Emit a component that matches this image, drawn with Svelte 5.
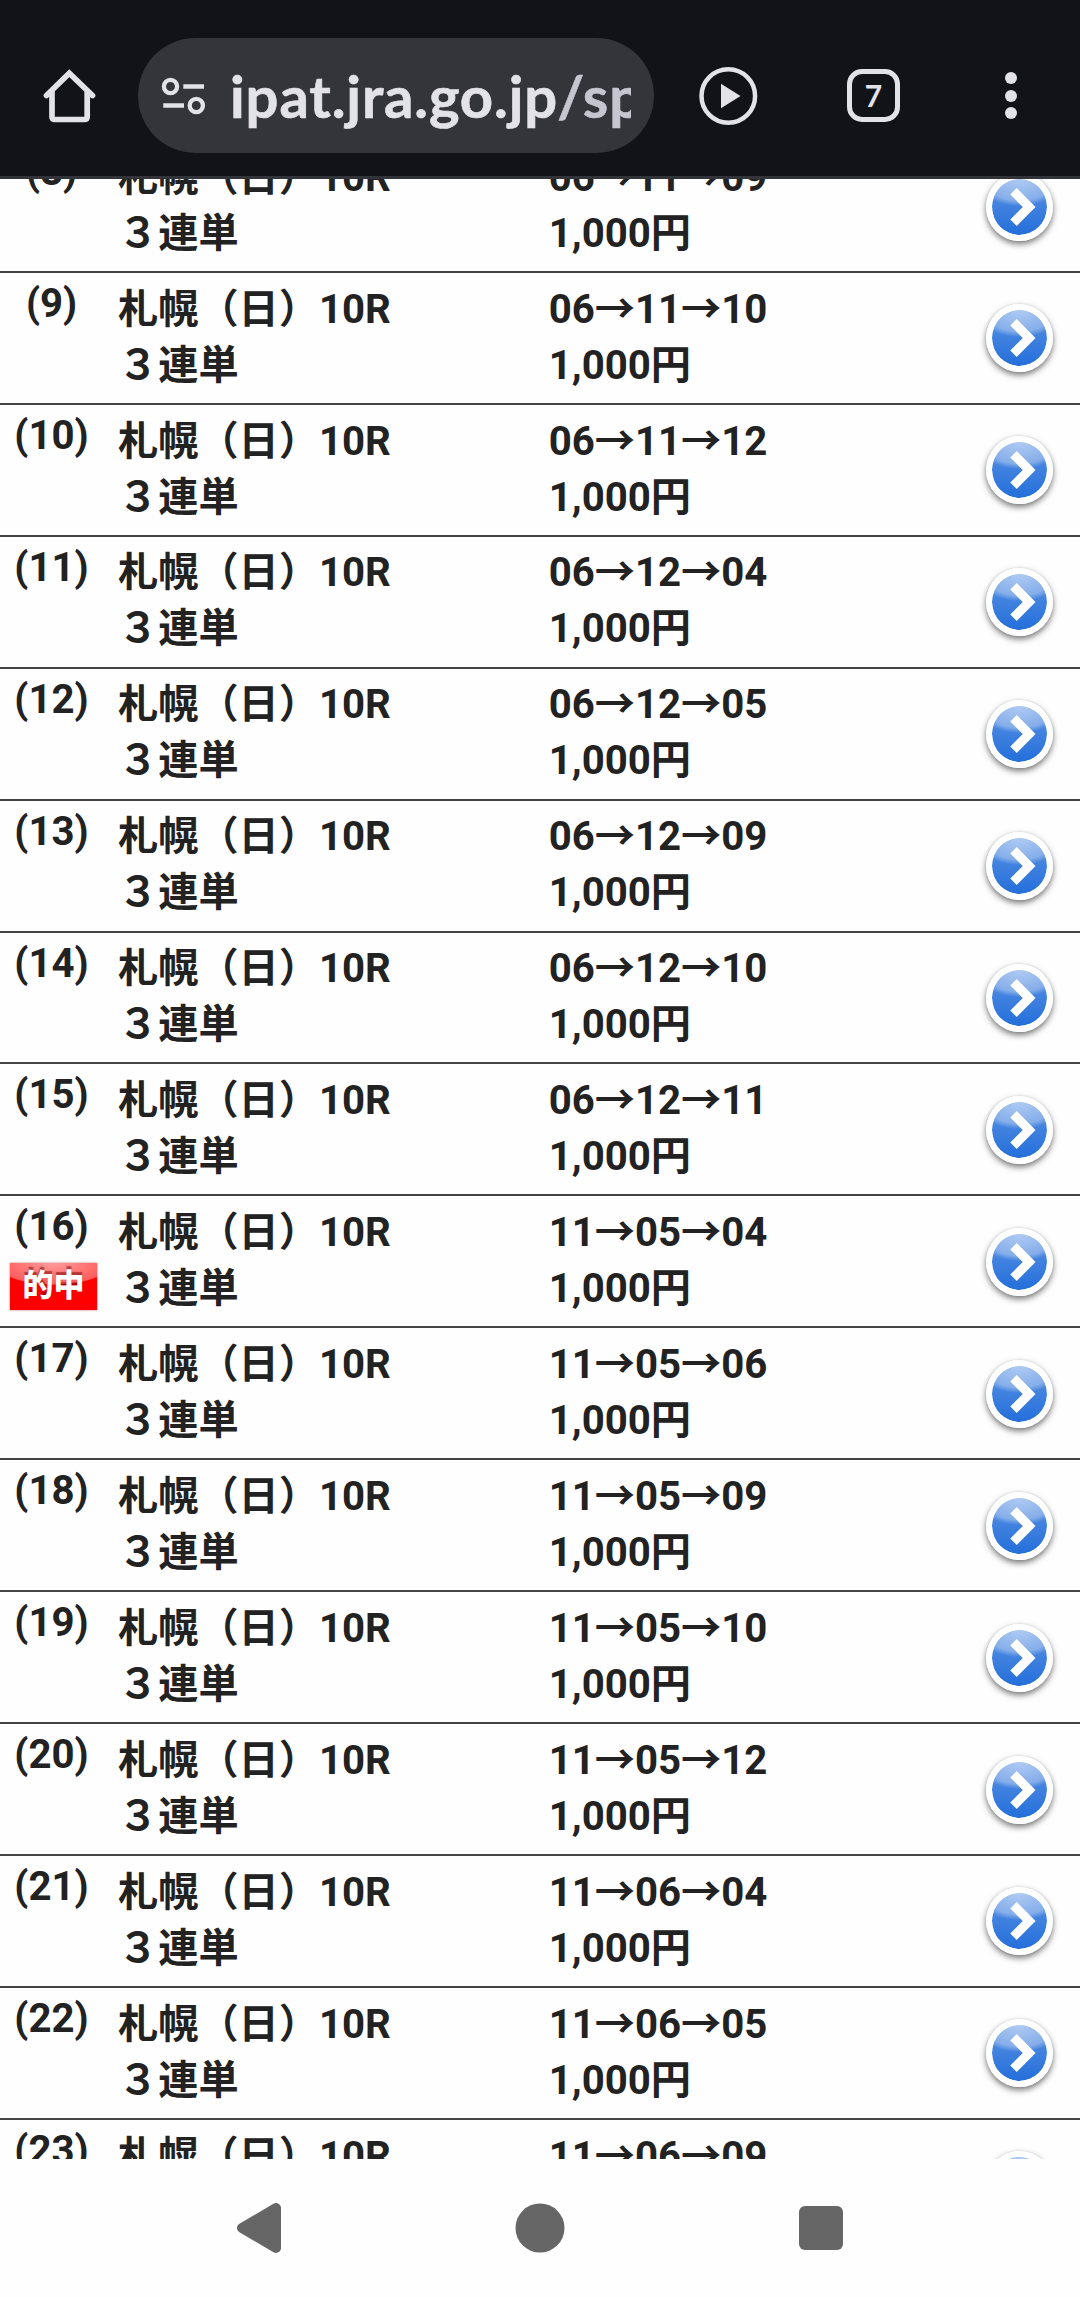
<script lang="ts">
	type Bet = { no: number; combo: string; hit?: boolean };

	const combos = [
		'06→11→09', '06→11→10', '06→11→12', '06→12→04', '06→12→05', '06→12→09',
		'06→12→10', '06→12→11', '11→05→04', '11→05→06', '11→05→09', '11→05→10',
		'11→05→12', '11→06→04', '11→06→05', '11→06→09'
	];
	const FIRST = 8;
	const bets: Bet[] = combos.map((combo, i) => ({ no: FIRST + i, combo, hit: FIRST + i === 16 }));
</script>

<div class="screen">
	<header>
		<svg class="home" width="54" height="56" viewBox="0 0 54 56">
			<path d="M4.5 27.500 27.300 5.300 50.500 27.500M10 24V48.500Q10 51.500 13 51.500H42.200Q45.200 51.500 45.200 48.500V24" />
		</svg>
		<div class="pill">
			<svg class="tune" width="44" height="38" viewBox="0 0 44 38">
				<circle cx="9.500" cy="9.500" r="6.600" />
				<path d="M22.300 9.500H43M2.300 28.500H23" />
				<circle cx="35.300" cy="28.500" r="6.600" />
			</svg>
			<div class="url">ipat.jra.go.jp<span>/sp</span></div>
		</div>
		<svg class="play" width="60" height="60" viewBox="0 0 60 60">
			<circle cx="30.300" cy="30" r="26.800" />
			<path d="M23 17.700V42.300L42.500 30Z" />
		</svg>
		<div class="tabs">7</div>
		<div class="menu"><i></i><i></i><i></i></div>
	</header>

	<main>
		<ul>
			{#each bets as bet (bet.no)}
				<li>
					<div class="no">
						<span>({bet.no})</span>
						{#if bet.hit}<b class="hit">的中</b>{/if}
					</div>
					<div class="race">
						<p>札幌（日）10R</p>
						<p>３連単</p>
					</div>
					<div class="pick">
						<p>{bet.combo}</p>
						<p>1,000円</p>
					</div>
					<div class="go">
						<svg width="56" height="56" viewBox="0 0 56 56">
							<path d="M21.500 12.300 37.200 28 21.500 43.700" />
						</svg>
					</div>
				</li>
			{/each}
		</ul>
	</main>

	<nav>
		<svg width="44" height="50" viewBox="0 0 44 50">
			<path d="M5 25 39 5V45Z" stroke-width="10" stroke-linejoin="round" />
		</svg>
		<svg width="50" height="50" viewBox="0 0 50 50"><circle cx="25" cy="25" r="24.500" /></svg>
		<svg width="44" height="44" viewBox="0 0 44 44"><rect width="44" height="44" rx="6" /></svg>
	</nav>
</div>

<style>
	:global(body) {
		margin: 0;
		background: #fefefe;
	}

	.screen {
		display: flex;
		flex-direction: column;
		width: 1080px;
		height: 2297px;
		overflow: hidden;
		font-family: Roboto, 'Noto Sans CJK JP', sans-serif;
		color: #222;
	}

	header {
		box-sizing: border-box;
		display: flex;
		align-items: center;
		flex: none;
		height: 179px;
		padding: 15px 0 0 42px;
		border-bottom: 3px solid #33343a;
		background: #121318;
	}

	svg {
		flex: none;
		display: block;
	}

	.home {
		fill: none;
		stroke: #e3e2e9;
		stroke-width: 5.7;
		stroke-linecap: round;
	}

	.pill {
		box-sizing: border-box;
		display: flex;
		align-items: center;
		width: 516px;
		height: 115px;
		margin-left: 42px;
		padding-left: 23px;
		border-radius: 58px;
		background: #34353a;
	}

	.tune {
		fill: none;
		stroke: #e3e2e9;
		stroke-width: 4.3;
	}

	.url {
		width: 401px;
		margin-left: 25px;
		overflow: hidden;
		font: 700 58px/76px Lato, sans-serif;
		letter-spacing: 0.85px;
		white-space: nowrap;
		color: #e3e2e9;
		-webkit-text-stroke: 0.6px;
	}

	.url span {
		color: #c4c6d0;
	}

	.play {
		margin-left: 44px;
		fill: #e3e2e9;
	}

	.play circle {
		fill: none;
		stroke: #e3e2e9;
		stroke-width: 4.5;
	}

	.tabs {
		box-sizing: border-box;
		width: 53px;
		height: 53px;
		margin-left: 89px;
		border: 5.5px solid #e3e2e9;
		border-radius: 15px;
		font: 700 30px/43px Lato, sans-serif;
		text-align: center;
		color: #e3e2e9;
	}

	.menu {
		display: flex;
		flex-direction: column;
		gap: 5.3px;
		margin-left: 105px;
	}

	.menu i {
		width: 12px;
		height: 12px;
		border-radius: 50%;
		background: #e3e2e9;
	}

	main {
		flex: none;
		height: 1980px;
		overflow: hidden;
	}

	ul {
		margin: -38px 0 0;
		padding: 0;
		list-style: none;
	}

	li {
		box-sizing: border-box;
		display: flex;
		height: 131.930px;
		border-bottom: 2px solid #444;
		font-size: 40.200px;
		font-weight: 700;
		line-height: 56px;
	}

	.no {
		display: flex;
		flex-direction: column;
		align-items: center;
		width: 103px;
		padding-top: 3px;
		white-space: nowrap;
	}

	.hit {
		width: 87px;
		height: 47px;
		margin: 8px 0 0 4px;
		background: radial-gradient(ellipse 58px 22px at 50% 0, #ff9c9c, #ff5c5c 96%, #f00 100%) #f00;
		box-shadow: 0 0 2px #c66;
		font-size: 31px;
		line-height: 45px;
		text-align: center;
		color: #fff;
		text-shadow: 0 -3px 1px #7008;
	}

	p {
		margin: 0;
	}

	.race,
	.pick {
		padding-top: 8.7px;
		white-space: nowrap;
	}

	.race {
		width: 430.700px;
		padding-left: 15px;
	}

	.pick {
		width: 437.300px;
	}

	.go {
		box-sizing: border-box;
		width: 67px;
		height: 68px;
		margin-top: 31.500px;
		border: 6px solid #fff;
		border-radius: 50%;
		background: radial-gradient(ellipse 44px 27px at 50% 0, #b0cbf3, #86aeea 80%, transparent 100%) padding-box,
			linear-gradient(#5b92e2, #246fdb) padding-box;
		box-shadow: 0 3px 6px #0008, 0 0 2px #0002;
	}

	.go path {
		fill: none;
		stroke: #fff;
		stroke-width: 9;
	}

	nav {
		display: flex;
		align-items: center;
		flex: 1;
		gap: 234px;
		padding-left: 237px;
		background: #fefefe;
		fill: #666;
		stroke: none;
	}

	nav path {
		stroke: #666;
	}
</style>
